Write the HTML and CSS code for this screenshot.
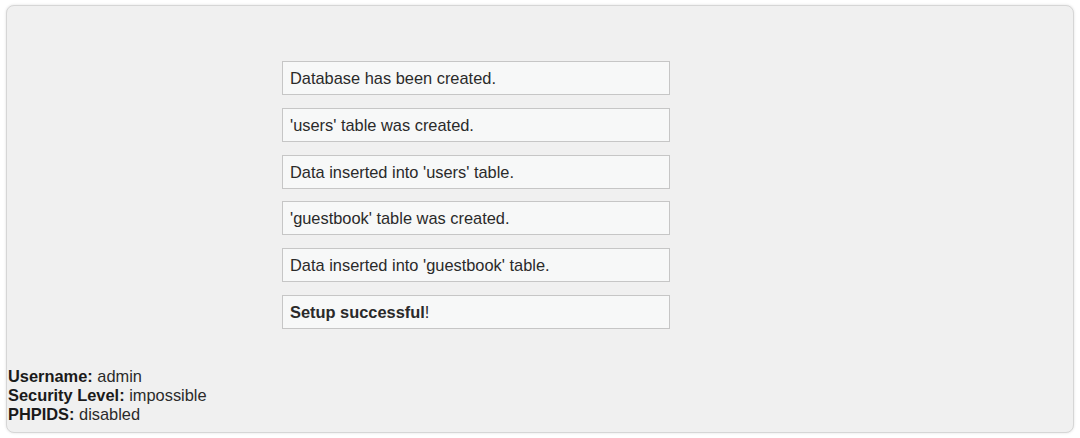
FILE: index.html
```html
<!DOCTYPE html>
<html>
<head>
<meta charset="utf-8">
<link rel="stylesheet" href="styles.css">
</head>
<body>
<div class="wrapper">
  <div class="messages">
    <div class="message">Database has been created.</div>
    <div class="message">'users' table was created.</div>
    <div class="message">Data inserted into 'users' table.</div>
    <div class="message">'guestbook' table was created.</div>
    <div class="message">Data inserted into 'guestbook' table.</div>
    <div class="message"><strong>Setup successful</strong>!</div>
  </div>
  <div class="footer-info">
    <div><strong>Username:</strong> admin</div>
    <div><strong>Security Level:</strong> impossible</div>
    <div><strong>PHPIDS:</strong> disabled</div>
  </div>
</div>
</body>
</html>
```
FILE: styles.css
```css
html, body {
  margin: 0;
  padding: 0;
  background: #ffffff;
}
body {
  font-family: "Liberation Sans", Arial, sans-serif;
  font-size: 16.4px;
  color: #222222;
}
.wrapper {
  margin: 5px 6px;
  height: 428px;
  box-sizing: border-box;
  background: #f0f0f0;
  border: 1px solid #d6d6d6;
  border-radius: 8px;
  box-shadow: 0 0 3px rgba(0, 0, 0, 0.12);
  display: flex;
  flex-direction: column;
}
.messages {
  padding-top: 55px;
  padding-left: 275px;
  display: flex;
  flex-direction: column;
  gap: 12.8px;
}
.message {
  width: 388px;
  box-sizing: border-box;
  height: 34px;
  background: #f7f8f8;
  border: 1px solid #c6c6c6;
  padding: 7px 7px;
  line-height: 19px;
  color: #2a2a2a;
}
.footer-info {
  margin-top: auto;
  padding: 0 0 8px 1px;
  line-height: 19px;
  color: #2a2a2a;
}
.footer-info strong {
  color: #1a1a1a;
}
```
